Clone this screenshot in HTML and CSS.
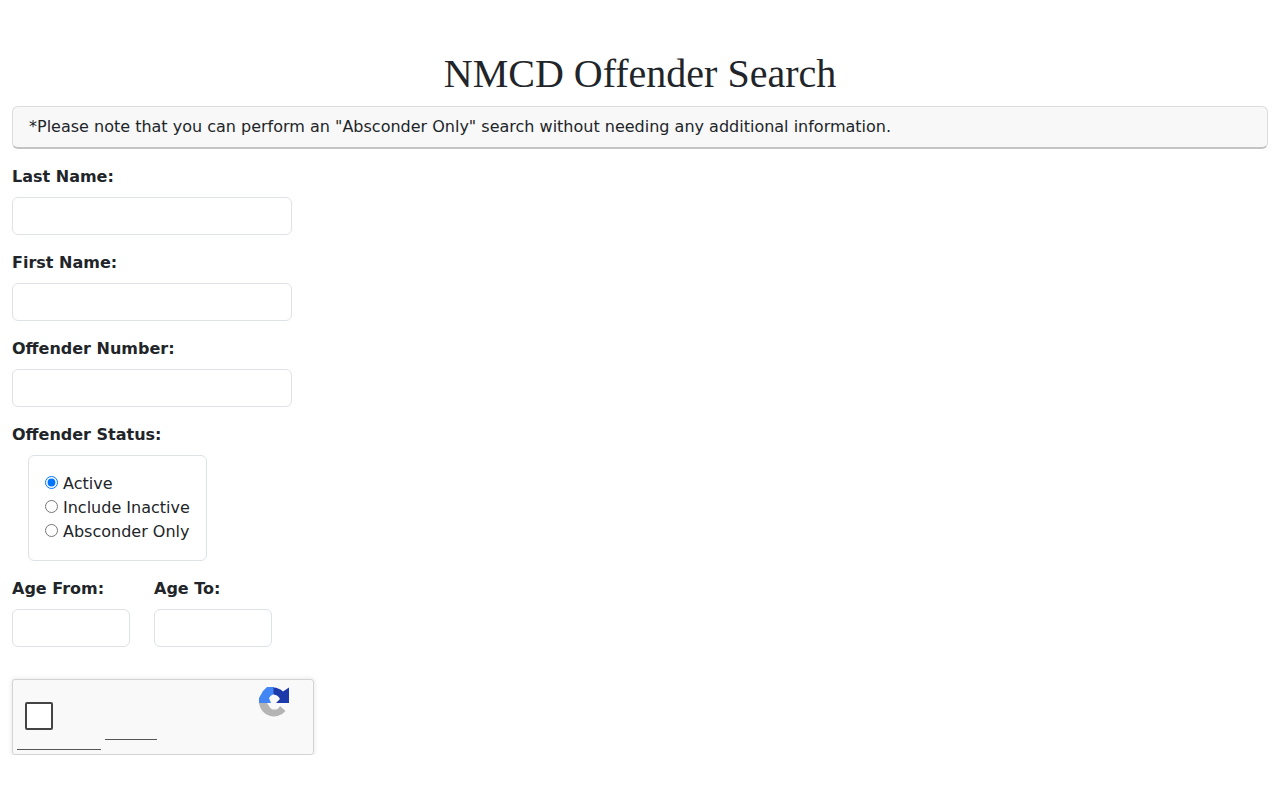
FILE: index.html
```html
<!DOCTYPE html>
<html lang="en">
<head>
<meta charset="utf-8">
<title>NMCD Offender Search</title>
<link rel="stylesheet" href="styles.css">
</head>
<body>
<main class="page">
  <h1 class="title">NMCD Offender Search</h1>
  <div class="note">*Please note that you can perform an "Absconder Only" search without needing any additional information.</div>
  <form class="form">
    <div class="field">
      <label class="label" for="last">Last Name:</label>
      <input class="input" id="last" type="text">
    </div>
    <div class="field">
      <label class="label" for="first">First Name:</label>
      <input class="input" id="first" type="text">
    </div>
    <div class="field">
      <label class="label" for="num">Offender Number:</label>
      <input class="input" id="num" type="text">
    </div>
    <div class="field">
      <div class="label">Offender Status:</div>
      <div class="status">
        <label class="radio"><input type="radio" name="status" checked><span>Active</span></label>
        <label class="radio"><input type="radio" name="status"><span>Include Inactive</span></label>
        <label class="radio"><input type="radio" name="status"><span>Absconder Only</span></label>
      </div>
    </div>
    <div class="ages">
      <div class="age">
        <label class="label" for="from">Age From:</label>
        <input class="input input-age" id="from" type="text">
      </div>
      <div class="age">
        <label class="label" for="to">Age To:</label>
        <input class="input input-age" id="to" type="text">
      </div>
    </div>
    <div class="captcha">
      <div class="captcha-box"></div>
      <svg class="captcha-logo" viewBox="0 0 32 32" width="32" height="32" aria-hidden="true">
        <path d="M1 17H9L11 20A6 6 0 0 0 22 20L27.500 25A15 15 0 0 1 1 17Z" fill="#b4b4b4"/>
        <path d="M1 17V12L5 5 9 1H16V8A8 8 0 0 0 11 12L13 17Z" fill="#4285f4"/>
        <path d="M15.500 1.500A15 15 0 0 1 25 5.500L31 1.500V17H18L22 13A8 8 0 0 0 15.500 8.500Z" fill="#1c3aa9"/>
      </svg>
      <span class="captcha-line line-a"></span>
      <span class="captcha-line line-b"></span>
    </div>
  </form>
</main>
</body>
</html>
```
FILE: styles.css
```css
* {
  box-sizing: border-box;
}

html, body {
  margin: 0;
  background: #fff;
}

body {
  font-family: "DejaVu Sans", sans-serif;
  font-size: 16px;
  line-height: 24px;
  color: #212529;
}

.page {
  padding: 50px 12px 0;
}

.title {
  margin: 0 0 8px;
  font-family: "Liberation Serif", serif;
  font-size: 40px;
  font-weight: 400;
  line-height: 48px;
  text-align: center;
}

.note {
  height: 43px;
  padding: 8px 16px;
  background: #f8f8f8;
  border: 1px solid #dcdcdc;
  border-bottom: 2px solid #c4c4c4;
  border-radius: 6px;
}

.form {
  display: flex;
  flex-direction: column;
  align-items: flex-start;
  padding-top: 16px;
}

.field {
  margin-bottom: 16px;
}

.label {
  display: block;
  margin-bottom: 8px;
  font-weight: 700;
}

.input {
  display: block;
  width: 280px;
  height: 38px;
  padding: 6px 12px;
  background: #fff;
  border: 1px solid #dee2e6;
  border-radius: 6px;
}

.input-age {
  width: 118px;
}

.status {
  display: flex;
  flex-direction: column;
  margin-left: 16px;
  padding: 16px;
  border: 1px solid #dee2e6;
  border-radius: 6px;
}

.radio {
  display: flex;
  align-items: center;
  height: 24px;
}

.radio input {
  width: 13px;
  height: 13px;
  margin: 0 5px 3px 0;
}

.ages {
  display: flex;
  gap: 24px;
  margin-bottom: 32px;
}

.captcha {
  position: relative;
  width: 302px;
  height: 76px;
  background: #f9f9f9;
  border: 1px solid #d3d3d3;
  border-radius: 3px;
  box-shadow: 0 0 4px 1px rgba(0, 0, 0, 0.08);
}

.captcha-box {
  position: absolute;
  left: 12px;
  top: 22px;
  width: 28px;
  height: 28px;
  background: #fff;
  border: 2px solid #444;
  border-radius: 2px;
}

.captcha-logo {
  position: absolute;
  left: 245px;
  top: 6px;
}

.captcha-line {
  position: absolute;
  height: 1px;
  background: #555;
}

.line-a {
  left: 4px;
  top: 69px;
  width: 84px;
}

.line-b {
  left: 92px;
  top: 59px;
  width: 52px;
}
```
